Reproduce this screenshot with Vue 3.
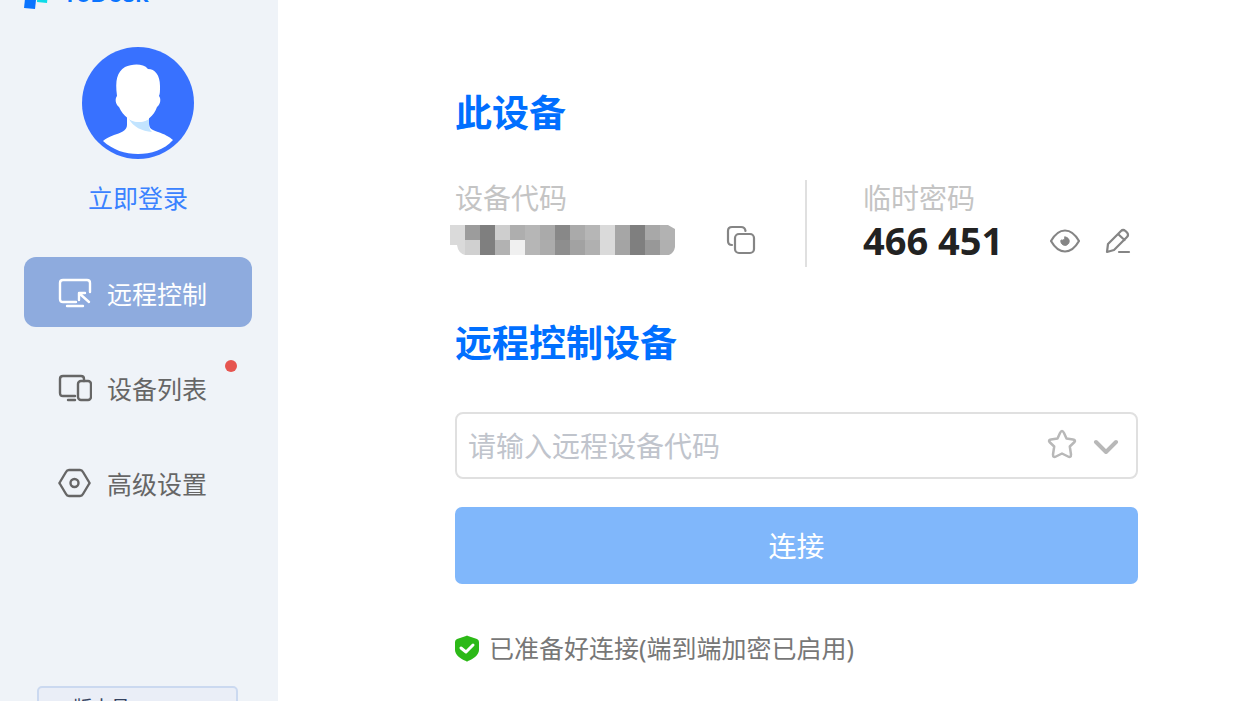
<script setup>
import { ref } from 'vue'

const target = ref('')
const navItems = [
  { key: 'remote', label: '远程控制', active: true },
  { key: 'devices', label: '设备列表', badge: true },
  { key: 'settings', label: '高级设置' },
]

// Grey levels of the masked device code, two rows of square blocks
const maskRows = [
  [218, 156, 127, 206, 174, 182, 170, 136, 170, 182, 218, 166, 127, 168, 178],
  [218, 208, 127, 178, 240, 182, 172, 142, 162, 176, 218, 164, 127, 152, 176],
]
const maskCells = maskRows.flatMap((row, r) =>
  row.map((v, c) => ({ x: c * 15, y: r * 15, fill: `rgb(${v},${v},${v})` }))
)
</script>

<template>
  <div class="shell">
    <aside class="sidebar">
      <div class="brand">
        <svg class="brand-mark" viewBox="0 0 26 32" aria-hidden="true">
          <path d="M3 3 L14 4 L11 31 L0 30 Z" fill="#0a74ff" />
          <path d="M14 4 L25 5 L23 25 L13 24 Z" fill="#0ddbe8" />
        </svg>
        <span class="brand-name">ToDesk</span>
      </div>

      <div class="account">
        <svg class="avatar" viewBox="0 0 112 112" aria-hidden="true">
          <circle cx="56" cy="56" r="56" fill="#3871ff" />
          <path
            d="M45 68 V78 C45 84 38 86 32 88 C27 90 23 92 21 94 C31 103 43 107 56 107 C69 107 82 103 91 93 C88 90 82 87 76 85 C70 83 67 82 67 76 V68 Z"
            fill="#fff"
          />
          <path d="M47 72 C52 76 62 76 67 72 V76 C67 81 68 83 70 85 C60 84 51 80 47 72 Z" fill="#c2e4ff" />
          <path
            d="M35 49 C33 33 35 25 43 20 C50 17 61 16 66 22 C73 22 78 28 78 39 C78 44 78 47 77 49 C79 51 79 57 75 60 C72 69 64 75 57 75 C49 75 41 69 37 60 C33 57 33 51 35 49 Z"
            fill="#fff"
          />
        </svg>
        <a class="login" href="#">立即登录</a>
      </div>

      <nav class="nav">
        <button
          v-for="item in navItems"
          :key="item.key"
          type="button"
          class="nav-item"
          :class="{ active: item.active }"
        >
          <svg v-if="item.key === 'remote'" class="nav-icon" viewBox="0 0 34 34">
            <path d="M18 25 H5 Q2 25 2 22 V6 Q2 3 5 3 H29 Q32 3 32 6 V15" />
            <path d="M9 29 H25" />
            <path d="M31 25 L22 17 M21 23 V16 H27" />
          </svg>
          <svg v-else-if="item.key === 'devices'" class="nav-icon" viewBox="0 0 34 34">
            <path d="M17 24 H5 Q2 24 2 21 V7 Q2 4 5 4 H23 Q26 4 26 7 V9" />
            <rect x="20" y="9" width="13" height="19" rx="3" />
            <path d="M10 28 H17" />
          </svg>
          <svg v-else class="nav-icon" viewBox="0 0 34 34">
            <path
              d="M11 3 H22 Q24 3 25 5 L31 15 Q32 16 31 17 L25 27 Q24 29 22 29 H11 Q9 29 8 27 L2 17 Q1 16 2 15 L8 5 Q9 3 11 3 Z"
            />
            <circle cx="16.500" cy="16" r="4" />
          </svg>
          <span>{{ item.label }}</span>
          <i v-if="item.badge" class="badge"></i>
        </button>
      </nav>

      <div class="version">版本号</div>
    </aside>

    <main class="main">
      <h2 class="title">此设备</h2>
      <section class="device">
        <div class="cell">
          <div class="label">设备代码</div>
          <div class="value-row">
            <svg class="mask" viewBox="0 0 225 30" aria-hidden="true">
              <defs>
                <clipPath id="mask-shape">
                  <path d="M0 0 H218 L225 4 V22 Q224 28 219 30 H15 Q8 28 7 20 H0 Z" />
                </clipPath>
              </defs>
              <g clip-path="url(#mask-shape)" shape-rendering="crispEdges">
                <rect
                  v-for="(cell, i) in maskCells"
                  :key="i"
                  :x="cell.x"
                  :y="cell.y"
                  width="15"
                  height="15"
                  :fill="cell.fill"
                />
              </g>
            </svg>
            <button type="button" class="icon-btn" aria-label="复制">
              <svg class="copy" viewBox="0 0 30 30">
                <path d="M6 20 Q2 20 2 16 V6 Q2 2 6 2 H15 Q19 2 19.500 6" />
                <rect x="9" y="9" width="19" height="19" rx="4" />
              </svg>
            </button>
          </div>
        </div>

        <div class="cell second">
          <div class="label">临时密码</div>
          <div class="value-row">
            <strong class="password">466 451</strong>
            <div class="actions">
              <button type="button" class="icon-btn" aria-label="显示密码">
                <svg class="eye" viewBox="0 0 30 24">
                  <path d="M1 12 C5 5 10 1.500 15 1.500 S25 5 29 12 C25 19 20 22.500 15 22.500 S5 19 1 12 Z" />
                  <path class="pupil" d="M15 8 A4.200 4.200 0 1 1 11 11 Q14.500 12 15 8 Z" />
                </svg>
              </button>
              <button type="button" class="icon-btn" aria-label="编辑密码">
                <svg class="pen" viewBox="0 0 26 26">
                  <path d="M2 24 L3 16 L16 3 Q18 1 20.500 3 L22 4.500 Q24 7 22 9 L9 22 Z M13 6 L19.500 12" />
                  <path d="M14 24 H24" />
                </svg>
              </button>
            </div>
          </div>
        </div>
      </section>

      <h2 class="title second-title">远程控制设备</h2>
      <div class="field">
        <input v-model="target" type="text" aria-label="远程设备代码" placeholder="请输入远程设备代码" />
        <button type="button" class="icon-btn" aria-label="收藏">
          <svg class="star" viewBox="0 0 30 34">
            <path
              d="M15 2 Q16 2 17 4 L19.500 9.500 L26 10.500 Q29 11 27.500 13 L22.800 17.500 L24 25.500 Q24 29 21 27.500 L15 24.500 L9 27.500 Q6 29 6 25.500 L7.200 17.500 L2.500 13 Q1 11 4 10.500 L10.500 9.500 L13 4 Q14 2 15 2 Z"
            />
          </svg>
        </button>
        <button type="button" class="icon-btn" aria-label="展开">
          <svg class="chevron" viewBox="0 0 26 16"><path d="M3 4 L13 14 L23 4" /></svg>
        </button>
      </div>
      <button type="button" class="connect">连接</button>

      <p class="status">
        <svg class="shield" viewBox="0 0 24 27" aria-hidden="true">
          <path
            d="M11 1 Q12 0 13 1 L22 4 Q24 5 24 7 V15 C24 20 18 24 13 26 Q12 27 11 26 C6 24 0 20 0 15 V7 Q0 5 2 4 Z"
            fill="#2cb917"
          />
          <path d="M6 13 L11 17 L18 10" fill="none" stroke="#fff" stroke-width="3" stroke-linecap="round" stroke-linejoin="round" />
        </svg>
        <span>已准备好连接(端到端加密已启用)</span>
      </p>
    </main>
  </div>
</template>

<style>
body {
  margin: 0;
  background: #fff;
}
</style>

<style scoped>
.shell {
  display: flex;
  height: 100vh;
  overflow: hidden;
  background: #fff;
  font-family: "Noto Sans", "Noto Sans CJK SC", sans-serif;
}
button {
  font-family: inherit;
  border: 0;
  cursor: pointer;
}
svg {
  display: block;
  flex: none;
}
.sidebar {
  box-sizing: border-box;
  flex: none;
  width: 278px;
  padding: 0 26px 0 24px;
  background: #eff3f8;
}
.brand {
  display: flex;
  align-items: center;
  gap: 12px;
  height: 32px;
  margin-top: -22px;
}
.brand-mark {
  width: 26px;
  height: 32px;
}
.brand-name {
  font: 600 24px/32px Inter, sans-serif;
  color: #0a74ff;
}
.account {
  display: flex;
  flex-direction: column;
  align-items: center;
  margin-top: 37px;
}
.avatar {
  width: 112px;
  height: 112px;
}
.login {
  margin-top: 21px;
  font-size: 25px;
  line-height: 36px;
  color: #3a82ff;
  text-decoration: none;
}
.nav {
  display: grid;
  gap: 25px;
  margin-top: 41px;
}
.nav-item {
  position: relative;
  display: flex;
  align-items: center;
  gap: 15px;
  height: 70px;
  padding: 3px 34px 0;
  border-radius: 12px;
  background: none;
  font-size: 25px;
  line-height: 36px;
  color: #666;
}
.nav-item.active {
  background: #8eabde;
  color: #fff;
}
.nav-icon {
  width: 34px;
  height: 34px;
  fill: none;
  stroke: currentColor;
  stroke-width: 2.400;
  stroke-linecap: round;
  stroke-linejoin: round;
}
.badge {
  position: absolute;
  top: 8px;
  right: 15px;
  width: 12px;
  height: 12px;
  border-radius: 50%;
  background: #e65550;
}
.version {
  margin: 169px 14px 0 13px;
  padding: 8px 34px;
  border: 2px solid #cbd9f0;
  border-radius: 5px;
  background: #eaeef7;
  font-size: 19px;
  line-height: 24px;
  color: #34425f;
}
.main {
  flex: 1;
  min-width: 0;
  padding: 91px 118px 0 177px;
}
.title {
  margin: 0;
  font-size: 37px;
  line-height: 44px;
  font-weight: 700;
  color: #006fff;
}
.device {
  display: grid;
  grid-template-columns: 350fr 333fr;
  margin-top: 45px;
}
.cell {
  box-sizing: border-box;
  height: 87px;
  padding-right: 49px;
}
.cell.second {
  padding: 0 7px 0 56px;
  border-left: 2px solid #e0e0e0;
}
.label {
  font-size: 28px;
  line-height: 36px;
  color: #c4c4c4;
}
.value-row {
  display: flex;
  align-items: center;
  justify-content: space-between;
  height: 48px;
}
.mask {
  width: 225px;
  height: 30px;
  margin-left: -5px;
}
.password {
  font-size: 38px;
  line-height: 44px;
  font-weight: 700;
  color: #222;
}
.actions {
  display: flex;
  align-items: center;
  gap: 25px;
  padding-top: 2px;
}
.icon-btn {
  padding: 0;
  background: none;
}
.icon-btn svg {
  fill: none;
  stroke: #858585;
  stroke-width: 2.200;
  stroke-linecap: round;
  stroke-linejoin: round;
}
.copy {
  width: 30px;
  height: 30px;
}
.eye {
  width: 30px;
  height: 24px;
}
.icon-btn .pupil {
  fill: #858585;
  stroke: #858585;
  stroke-width: 1;
}
.pen {
  width: 26px;
  height: 26px;
}
.second-title {
  margin-top: 54px;
}
.field {
  box-sizing: border-box;
  display: flex;
  align-items: center;
  gap: 16px;
  height: 67px;
  margin-top: 47px;
  padding: 0 17px 0 11px;
  border: 2px solid #e0e0e0;
  border-radius: 8px;
}
.field input {
  flex: 1;
  min-width: 0;
  padding: 0;
  border: 0;
  outline: 0;
  background: none;
  font-family: inherit;
  font-size: 28px;
  line-height: 40px;
  color: #222;
}
.field input::placeholder {
  color: #c0c4cc;
  opacity: 1;
}
.star {
  width: 30px;
  height: 34px;
}
.icon-btn .star {
  stroke: #b8b8b8;
  stroke-width: 2.500;
}
.chevron {
  width: 26px;
  height: 16px;
}
.icon-btn .chevron {
  stroke: #b8b8b8;
  stroke-width: 4;
}
.connect {
  display: block;
  width: 100%;
  height: 77px;
  margin-top: 28px;
  border-radius: 7px;
  background: #80b7fb;
  font-size: 28px;
  line-height: 40px;
  color: #fff;
}
.status {
  display: flex;
  align-items: center;
  gap: 10px;
  margin: 46px 0 0;
  font-size: 25px;
  line-height: 36px;
  color: #777;
}
.shield {
  width: 24px;
  height: 27px;
}
</style>
